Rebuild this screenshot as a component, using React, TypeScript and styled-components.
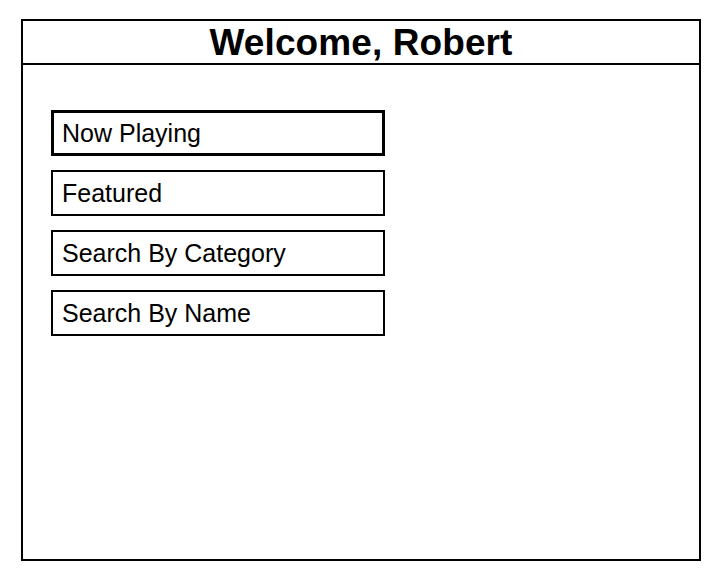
import React from "react";
import styled, { createGlobalStyle } from "styled-components";

const Global = createGlobalStyle`
  html, body {
    margin: 0;
    padding: 0;
    background: #ffffff;
  }
  body {
    font-family: "Liberation Sans", Arial, Helvetica, sans-serif;
    color: #000;
  }
  * { box-sizing: border-box; }
`;

const Page = styled.div`
  padding: 19px 0 0 21px;
`;

const Frame = styled.div`
  width: 680px;
  height: 542px;
  border: 2px solid #000;
  display: flex;
  flex-direction: column;
`;

const Header = styled.header`
  height: 44px;
  border-bottom: 2px solid #000;
  display: flex;
  align-items: center;
  justify-content: center;
`;

const Title = styled.h1`
  margin: 0;
  font-size: 37px;
  font-weight: 700;
  line-height: 1;
  letter-spacing: 0.1px;
  padding-top: 1px;
`;

const Menu = styled.nav`
  display: flex;
  flex-direction: column;
  gap: 14px;
  padding: 45px 0 0 28px;
`;

const MenuItem = styled.div<{ $active?: boolean }>`
  width: 334px;
  height: 46px;
  border: ${(p) => (p.$active ? "3px" : "2px")} solid #000;
  display: flex;
  align-items: center;
  padding-left: ${(p) => (p.$active ? "8px" : "9px")};
  font-size: 25px;
  line-height: 1;
  background: #fff;
`;

const items = ["Now Playing", "Featured", "Search By Category", "Search By Name"];

export default function App() {
  return (
    <>
      <Global />
      <Page>
        <Frame>
          <Header>
            <Title>Welcome, Robert</Title>
          </Header>
          <Menu>
            {items.map((label, i) => (
              <MenuItem key={label} $active={i === 0}>
                {label}
              </MenuItem>
            ))}
          </Menu>
        </Frame>
      </Page>
    </>
  );
}
